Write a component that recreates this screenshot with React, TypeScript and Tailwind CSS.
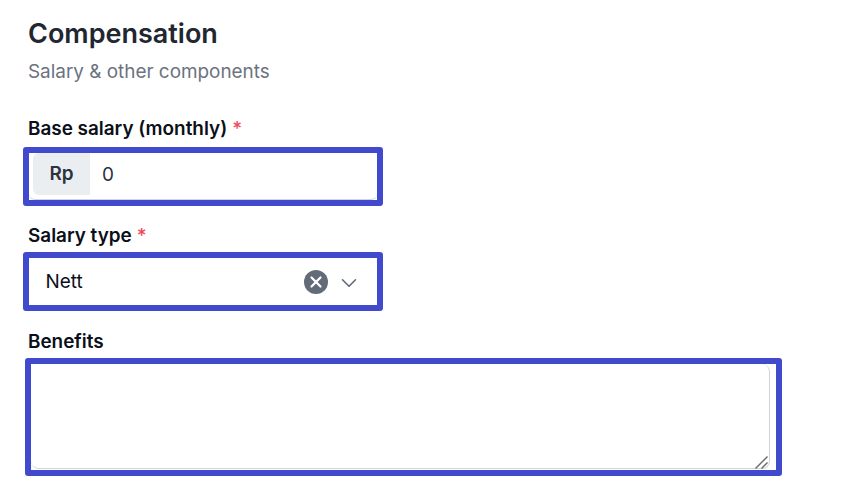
import { ChevronDown, X } from 'lucide-react'

const font = { fontFamily: 'Inter, sans-serif' }

function Label({ text, required }: { text: string; required?: boolean }) {
  return (
    <p className="h-6 text-[18.9px] leading-6 font-semibold text-[#0b0f19]">
      {text}
      {required && <span className="ml-[5px] font-medium text-[#ec4a5e]">*</span>}
    </p>
  )
}

export default function App() {
  return (
    <div style={font} className="w-[848px] h-[502px] overflow-hidden bg-white pl-7 pt-[18px]">
      <h1 className="h-8 text-[27px] leading-8 font-semibold text-[#212631]">Compensation</h1>
      <p className="mt-2.5 h-6 text-[18.9px] leading-6 text-[#6b7280]">Salary &amp; other components</p>

      <div className="mt-[33px]">
        <Label text="Base salary (monthly)" required />
        <div className="mt-1.5 -ml-[5px] w-[360px] h-[59px] rounded-[3px] border-[6px] border-[#4149cc] bg-white">
          <div className="h-full rounded-b-md border-b border-[#d1d5db] flex items-start pl-1">
            <span className="w-[57px] h-[42px] rounded-l-md bg-[#ebeef1] flex items-center justify-center text-[18.9px] font-semibold text-[#2b3240]">
              Rp
            </span>
            <input
              readOnly
              value="0"
              className="ml-3 h-[42px] flex-1 min-w-0 outline-none text-[18.9px] text-[#2b3240] bg-transparent"
            />
          </div>
        </div>
      </div>

      <div className="mt-[18px]">
        <Label text="Salary type" required />
        <div className="mt-1 -ml-[5px] w-[360px] h-[59px] rounded-[3px] border-[6px] border-[#4149cc] bg-white flex items-center pl-[16.5px] pr-[15px]">
          <span className="flex-1 pt-0.5 text-[18.9px] text-[#0b0f19]">Nett</span>
          <span className="w-6 h-6 rounded-full bg-[#636b78] flex items-center justify-center">
            <X className="w-[18px] h-[18px] text-white" strokeWidth={3} />
          </span>
          <span className="ml-2 pt-0.5">
            <ChevronDown className="w-[26px] h-[26px] text-[#636b78]" strokeWidth={1.5} />
          </span>
        </div>
      </div>

      <div className="mt-[19px]">
        <Label text="Benefits" />
        <div className="relative mt-1 -ml-[3px] w-[757px] h-[118px] rounded-[3px] border-[6px] border-[#4149cc] bg-white">
          <textarea
            readOnly
            className="block w-[739px] h-[105px] resize-none rounded-lg border border-[#d1d5db] border-l-0 border-t-0 bg-white outline-none"
          />
          <svg className="absolute left-[724px] top-[92px] w-[13px] h-[13px]" viewBox="0 0 13 13" fill="none" stroke="#6b6b6b" strokeWidth="1.4">
            <path d="M0.5 12.5 L12.5 0.5" />
            <path d="M6.5 12.5 L12.5 6.5" />
          </svg>
        </div>
      </div>
    </div>
  )
}
